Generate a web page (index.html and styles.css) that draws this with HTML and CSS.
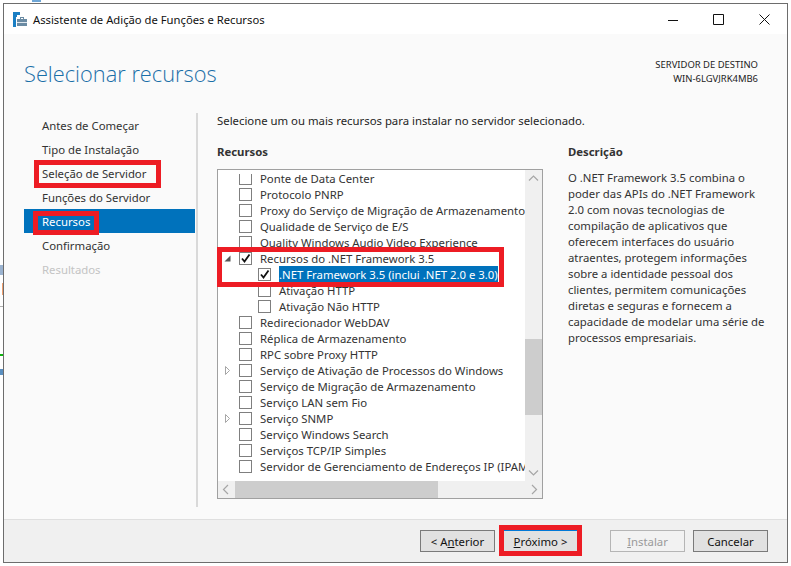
FILE: index.html
```html
<!DOCTYPE html>
<html lang="pt">
<head>
<meta charset="utf-8">
<title>Assistente de Adição de Funções e Recursos</title>
<link rel="stylesheet" href="styles.css">
</head>
<body>
<div class="window">
  <div class="titlebar">
    <svg class="app-icon" width="15" height="15" viewBox="0 0 15 15">
      <path d="M0 0h7v3H4v2H3v10H0z" fill="#1a7fc4"/>
      <path d="M4 7h3V5h4v2h3v7H4z" fill="#6a8ba3"/>
      <path d="M8 6h2v1H8z" fill="#fff"/>
      <path d="M4 10h10v1H4z" fill="#dfe7ee"/>
    </svg>
    <span class="title-text">Assistente de Adição de Funções e Recursos</span>
    <div class="win-controls">
      <svg width="10" height="10" viewBox="0 0 10 10"><path d="M0 5.500h10" stroke="#111" fill="none"/></svg>
      <svg width="11" height="11" viewBox="0 0 11 11"><path d="M.5.500h10v10H.5z" stroke="#111" fill="none"/></svg>
      <svg width="11" height="11" viewBox="0 0 11 11"><path d="M.5.500l10 10M10.500.500l-10 10" stroke="#111" fill="none"/></svg>
    </div>
  </div>
  <div class="body">
    <header class="head">
      <h1 class="page-title">Selecionar recursos</h1>
      <div class="dest">
        <div>SERVIDOR DE DESTINO</div>
        <div>WIN-6LGVJRK4MB6</div>
      </div>
    </header>
    <div class="columns">
      <nav class="nav">
        <div class="nav-item">Antes de Começar</div>
        <div class="nav-item">Tipo de Instalação</div>
        <div class="nav-item">Seleção de Servidor</div>
        <div class="nav-item">Funções do Servidor</div>
        <div class="nav-item selected">Recursos</div>
        <div class="nav-item">Confirmação</div>
        <div class="nav-item disabled">Resultados</div>
      </nav>
      <main class="main">
        <p class="intro">Selecione um ou mais recursos para instalar no servidor selecionado.</p>
        <div class="panes">
          <section class="features">
            <h2 class="label">Recursos</h2>
            <div class="list">
              <div class="list-top">
                <div class="viewport">
                  <div class="rows">
                    <div class="row"><i class="arrow"></i><i class="box"></i><span>Ponte de Data Center</span></div>
                    <div class="row"><i class="arrow"></i><i class="box"></i><span>Protocolo PNRP</span></div>
                    <div class="row"><i class="arrow"></i><i class="box"></i><span>Proxy do Serviço de Migração de Armazenamento</span></div>
                    <div class="row"><i class="arrow"></i><i class="box"></i><span>Qualidade de Serviço de E/S</span></div>
                    <div class="row"><i class="arrow"></i><i class="box"></i><span>Quality Windows Audio Video Experience</span></div>
                    <div class="row"><i class="arrow"><svg width="9" height="9" viewBox="0 0 9 9"><path d="M7.500 1.500v6h-6z" fill="#555"/></svg></i><i class="box"><svg width="11" height="11" viewBox="0 0 11 11"><path d="M2 5.500l2.500 3L9.500 1.500" stroke="#111" stroke-width="1.800" fill="none"/></svg></i><span>Recursos do .NET Framework 3.5</span></div>
                    <div class="row sub"><i class="box"><svg width="11" height="11" viewBox="0 0 11 11"><path d="M2 5.500l2.500 3L9.500 1.500" stroke="#111" stroke-width="1.800" fill="none"/></svg></i><span class="hl">.NET Framework 3.5 (inclui .NET 2.0 e 3.0)</span></div>
                    <div class="row sub"><i class="box"></i><span>Ativação HTTP</span></div>
                    <div class="row sub"><i class="box"></i><span>Ativação Não HTTP</span></div>
                    <div class="row"><i class="arrow"></i><i class="box"></i><span>Redirecionador WebDAV</span></div>
                    <div class="row"><i class="arrow"></i><i class="box"></i><span>Réplica de Armazenamento</span></div>
                    <div class="row"><i class="arrow"></i><i class="box"></i><span>RPC sobre Proxy HTTP</span></div>
                    <div class="row"><i class="arrow"><svg width="9" height="9" viewBox="0 0 9 9"><path d="M2.500 .500l4 4-4 4z" stroke="#a6a6a6" fill="none"/></svg></i><i class="box"></i><span>Serviço de Ativação de Processos do Windows</span></div>
                    <div class="row"><i class="arrow"></i><i class="box"></i><span>Serviço de Migração de Armazenamento</span></div>
                    <div class="row"><i class="arrow"></i><i class="box"></i><span>Serviço LAN sem Fio</span></div>
                    <div class="row"><i class="arrow"><svg width="9" height="9" viewBox="0 0 9 9"><path d="M2.500 .500l4 4-4 4z" stroke="#a6a6a6" fill="none"/></svg></i><i class="box"></i><span>Serviço SNMP</span></div>
                    <div class="row"><i class="arrow"></i><i class="box"></i><span>Serviço Windows Search</span></div>
                    <div class="row"><i class="arrow"></i><i class="box"></i><span>Serviços TCP/IP Simples</span></div>
                    <div class="row"><i class="arrow"></i><i class="box"></i><span>Servidor de Gerenciamento de Endereços IP (IPAM)</span></div>
                  </div>
                </div>
                <div class="vscroll">
                  <svg class="sb-end" width="17" height="17" viewBox="0 0 17 17"><path d="M4 10.500l4.500-4.500 4.500 4.500" stroke="#a6a6a6" stroke-width="1.200" fill="none"/></svg>
                  <div class="vtrack"><div class="vthumb"></div></div>
                  <svg class="sb-end" width="17" height="17" viewBox="0 0 17 17"><path d="M4 6.500l4.500 4.500 4.500-4.500" stroke="#a6a6a6" stroke-width="1.200" fill="none"/></svg>
                </div>
              </div>
              <div class="hscroll">
                <svg class="sb-end" width="17" height="17" viewBox="0 0 17 17"><path d="M10 4l-4.500 4.500 4.500 4.500" stroke="#a6a6a6" stroke-width="1.200" fill="none"/></svg>
                <div class="hthumb"></div>
                <div class="htrack"></div>
                <svg class="sb-end" width="17" height="17" viewBox="0 0 17 17"><path d="M7 4l4.500 4.500-4.500 4.500" stroke="#a6a6a6" stroke-width="1.200" fill="none"/></svg>
              </div>
            </div>
          </section>
          <section class="desc">
            <h2 class="label">Descrição</h2>
            <p class="desc-text">O .NET Framework 3.5 combina o<br>poder das APIs do .NET Framework<br>2.0 com novas tecnologias de<br>compilação de aplicativos que<br>oferecem interfaces do usuário<br>atraentes, protegem informações<br>sobre a identidade pessoal dos<br>clientes, permitem comunicações<br>diretas e seguras e fornecem a<br>capacidade de modelar uma série de<br>processos empresariais.</p>
          </section>
        </div>
      </main>
    </div>
  </div>
  <footer class="footer">
    <button class="btn">&lt; A<u>n</u>terior</button>
    <button class="btn primary"><u>P</u>róximo &gt;</button>
    <button class="btn off"><u>I</u>nstalar</button>
    <button class="btn">Cancelar</button>
  </footer>
</div>
<div class="mark m-server"></div>
<div class="mark m-recursos"></div>
<div class="mark m-net"></div>
<div class="mark m-next"></div>
<div class="bg b0"></div>
<div class="bg b1"></div>
<div class="bg b2"></div>
<div class="bg b3"></div>
<div class="bg b4"></div>
<div class="bg b5"></div>
</body>
</html>
```
FILE: styles.css
```css
* { box-sizing: border-box; }
html, body { margin: 0; padding: 0; height: 566px; overflow: hidden; background: #fff; }
body { font: 11.35px/16px "Noto Sans", sans-serif; color: #1f1f1f; position: relative; }
.window { margin: 3px 3px 0 3px; width: 785px; height: 560px; border: 1px solid #6d6d6d; display: flex; flex-direction: column; background: #fafafa; }
.titlebar { height: 30px; flex: none; background: #fff; display: flex; align-items: center; padding-left: 9px; }
.app-icon { margin-right: 5px; margin-top: 1px; }
.title-text { flex: 1; color: #111; margin-top: 2px; font-size: 11.25px; }
.win-controls { display: flex; align-items: center; gap: 35px; padding-right: 17px; margin-top: 1px; }
.body { flex: 1; min-height: 0; display: flex; flex-direction: column; }
.head { height: 79px; flex: none; display: flex; justify-content: space-between; padding: 23px 29px 0 20px; }
.page-title { margin: 0; font-size: 21.8px; line-height: 34px; font-weight: 300; color: #1a6fa8; font-family: "Open Sans", sans-serif; }
.dest { font-size: 9.45px; line-height: 14px; text-align: right; color: #222; padding-top: 1px; }
.columns { flex: 1; display: flex; min-height: 0; }
.nav { width: 172px; margin-left: 20px; flex: none; }
.nav-item { height: 24px; line-height: 26px; padding-left: 18px; color: #333; width: 171px; }
.nav-item.selected { background: #0072bc; color: #fff; }
.nav-item.disabled { color: #c4c4c4; }
.main { flex: 1; border-left: 2px solid #d9d9d9; padding-left: 19px; margin-bottom: 12px; }
.intro { margin: 0; height: 16px; line-height: 15px; }
.panes { display: flex; margin-top: 15px; }
.features { width: 326px; flex: none; }
.desc { margin-left: 25px; width: 205px; }
.label { margin: 0; font-size: inherit; font-weight: 700; line-height: 16px; color: #333; }
.list { margin-top: 9px; width: 326px; height: 330px; border: 1px solid #a0a0a0; background: #fff; display: flex; flex-direction: column; }
.list-top { flex: 1; min-height: 0; display: flex; }
.viewport { flex: 1; min-width: 0; overflow: hidden; margin-top: 4px; }
.rows { margin-top: -4px; }
.row { height: 16px; display: flex; align-items: center; white-space: nowrap; padding-left: 5px; color: #333; }
.row span { height: 16px; line-height: 18px; }
.row.sub { padding-left: 40px; }
.arrow { width: 9px; height: 9px; flex: none; margin-right: 7px; display: block; }
.arrow svg, .box svg { display: block; }
.box { width: 13px; height: 13px; flex: none; border: 1px solid #7f7f7f; background: #fff; margin-right: 8px; display: block; }
.row .hl { background: #0072bc; color: #fff; }
.vscroll { width: 17px; flex: none; background: #f0f0f0; display: flex; flex-direction: column; }
.sb-end { flex: none; display: block; }
.vtrack { flex: 1; padding-top: 152px; }
.vthumb { height: 76px; background: #cdcdcd; }
.hscroll { height: 17px; flex: none; background: #f0f0f0; display: flex; }
.hthumb { width: 203px; background: #cdcdcd; }
.htrack { flex: 1; }
.desc-text { margin: 10px 0 0; line-height: 16px; color: #333; white-space: nowrap; }
.footer { height: 43px; flex: none; background: #f0f0f0; border-top: 1px solid #dfdfdf; display: flex; align-items: flex-start; padding: 10px 19px 0 0; justify-content: flex-end; gap: 8px; }
.btn { width: 75px; height: 22px; padding: 1px 0 0; font: 11.35px/20px "Noto Sans", sans-serif; color: #111; background: #e1e1e1; border: 1px solid #7a7a7a; }
.btn.primary { border-color: #0078d7; margin-right: 24px; }
.btn.off { background: #f2f2f2; border-color: #b5b5b5; color: #9a9a9a; }
.mark { position: absolute; border: 5px solid #ed1c24; }
.m-server { left: 34px; top: 160px; width: 127px; height: 28px; }
.m-recursos { left: 33px; top: 211px; width: 66px; height: 24px; }
.m-net { left: 217px; top: 247px; width: 287px; height: 40px; }
.m-next { left: 499px; top: 525px; width: 83px; height: 31px; }
.bg { position: absolute; width: 3px; }
.b0 { left: 32px; top: 0; width: 9px; height: 2px; background: #6ea6d6; }
.b1 { left: 0; top: 265px; height: 10px; background: #9bb3d0; }
.b2 { left: 2px; top: 283px; width: 1px; height: 12px; background: #f0a070; }
.b3 { left: 0; top: 306px; height: 1px; background: #b0b0b0; }
.b4 { left: 0; top: 354px; height: 2px; background: #10b010; }
.b5 { left: 0; top: 369px; height: 6px; background: #5a8fc0; }
```
